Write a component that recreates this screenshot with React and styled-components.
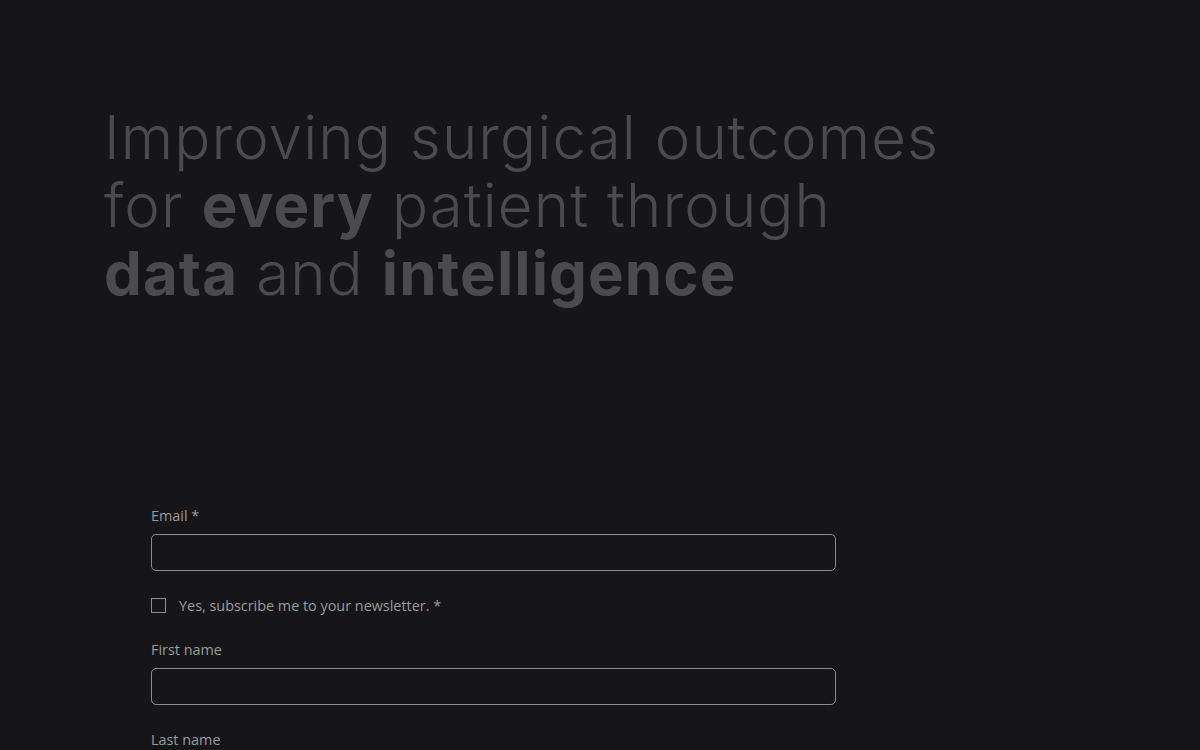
import React from 'react';
import styled, { createGlobalStyle } from 'styled-components';

const GlobalStyle = createGlobalStyle`
    html, body {
        margin: 0;
        padding: 0;
        background-color: #161619;
    }
    * {
        box-sizing: border-box;
    }
`;

const Page = styled.main`
    width: 1200px;
    height: 750px;
    overflow: hidden;
    background-color: #161619;
`;

const Hero = styled.section`
    padding: 103px 0 0 104px;
    height: 506px;
`;

const Headline = styled.h1`
    margin: 0;
    font-family: Inter, 'Noto Sans', sans-serif;
    font-weight: 300;
    font-size: 60px;
    line-height: 68px;
    letter-spacing: 1.1px;
    color: #4b4b4d;

    strong {
        font-weight: 700;
    }
`;

const Form = styled.form`
    width: 685px;
    margin-left: 151px;
    display: flex;
    flex-direction: column;
    font-family: 'Open Sans', 'Noto Sans', sans-serif;
    font-size: 14.4px;
    color: #9b9b9d;
`;

const Field = styled.div`
    display: flex;
    flex-direction: column;
    gap: 9px;
    margin-bottom: ${({ spacing }) => spacing || 0}px;
`;

const Label = styled.label`
    line-height: 19px;
`;

const Input = styled.input`
    height: 37px;
    width: 100%;
    border: 1px solid #8c8c8e;
    border-radius: 5px;
    background: transparent;
    color: #d0d0d0;
    font: inherit;
    padding: 0 12px;
    outline: none;
`;

const CheckRow = styled.label`
    display: flex;
    align-items: center;
    gap: 13px;
    line-height: 19px;
    margin-bottom: 25px;
`;

const Box = styled.span`
    width: 15px;
    height: 15px;
    border: 1px solid #8c8c8e;
    flex-shrink: 0;
`;

const App = () => (
    <Page>
        <GlobalStyle />
        <Hero>
            <Headline>
                Improving surgical outcomes
                <br />
                for <strong>every</strong> patient through
                <br />
                <strong>data</strong> and <strong>intelligence</strong>
            </Headline>
        </Hero>
        <Form>
            <Field spacing={25}>
                <Label>Email *</Label>
                <Input type="email" />
            </Field>
            <CheckRow>
                <Box />
                Yes, subscribe me to your newsletter. *
            </CheckRow>
            <Field spacing={25}>
                <Label>First name</Label>
                <Input type="text" />
            </Field>
            <Field>
                <Label>Last name</Label>
                <Input type="text" />
            </Field>
        </Form>
    </Page>
);

export default App;
